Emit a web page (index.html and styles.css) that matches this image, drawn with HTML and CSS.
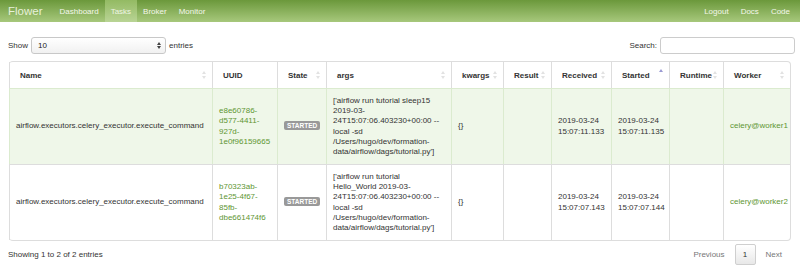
FILE: index.html
```html
<!DOCTYPE html>
<html lang="en">
<head>
    <meta charset="UTF-8">
    <title>Flower</title>
    <link rel="stylesheet" href="styles.css">
</head>
<body>
    <div class="navbar">
        <a class="brand" href="#">Flower</a>
        <a href="#">Dashboard</a>
        <a class="active" href="#">Tasks</a>
        <a href="#">Broker</a>
        <a href="#">Monitor</a>
        <div class="nav-right">
            <a href="#">Logout</a>
            <a href="#">Docs</a>
            <a href="#">Code</a>
        </div>
    </div>

    <div class="content">
        <div class="controls">
            <label class="length">Show
                <span class="select">10<span class="select-arrows"></span></span>
                entries</label>
            <label class="search">Search: <span class="search-input"></span></label>
        </div>

        <table class="tasks">
            <colgroup>
                <col style="width:203px">
                <col style="width:65px">
                <col style="width:49px">
                <col style="width:125px">
                <col style="width:52px">
                <col style="width:48px">
                <col style="width:60px">
                <col style="width:58px">
                <col style="width:54px">
                <col style="width:67px">
            </colgroup>
            <thead>
                <tr>
                    <th><div class="th-in">Name<span class="sort"></span></div></th>
                    <th><div class="th-in">UUID</div></th>
                    <th><div class="th-in">State<span class="sort"></span></div></th>
                    <th><div class="th-in">args<span class="sort"></span></div></th>
                    <th><div class="th-in">kwargs<span class="sort"></span></div></th>
                    <th><div class="th-in">Result<span class="sort"></span></div></th>
                    <th><div class="th-in">Received<span class="sort"></span></div></th>
                    <th><div class="th-in">Started<span class="sort asc"></span></div></th>
                    <th><div class="th-in">Runtime<span class="sort"></span></div></th>
                    <th><div class="th-in">Worker<span class="sort"></span></div></th>
                </tr>
            </thead>
            <tbody>
                <tr class="success">
                    <td>airflow.executors.celery_executor.execute_command</td>
                    <td><a href="#">e8e60786-<br>d577-4411-<br>927d-<br>1e0f96159665</a></td>
                    <td><span class="label">STARTED</span></td>
                    <td>['airflow run tutorial sleep15<br>2019-03-<br>24T15:07:06.403230+00:00 --<br>local -sd<br>/Users/hugo/dev/formation-<br>data/airflow/dags/tutorial.py']</td>
                    <td>{}</td>
                    <td></td>
                    <td class="nowrap">2019-03-24<br>15:07:11.133</td>
                    <td class="nowrap">2019-03-24<br>15:07:11.135</td>
                    <td></td>
                    <td class="nowrap"><a href="#">celery@worker1</a></td>
                </tr>
                <tr>
                    <td>airflow.executors.celery_executor.execute_command</td>
                    <td><a href="#">b70323ab-<br>1e25-4f67-<br>85fb-<br>dbe661474f6</a></td>
                    <td><span class="label">STARTED</span></td>
                    <td>['airflow run tutorial<br>Hello_World 2019-03-<br>24T15:07:06.403230+00:00 --<br>local -sd<br>/Users/hugo/dev/formation-<br>data/airflow/dags/tutorial.py']</td>
                    <td>{}</td>
                    <td></td>
                    <td class="nowrap">2019-03-24<br>15:07:07.143</td>
                    <td class="nowrap">2019-03-24<br>15:07:07.144</td>
                    <td></td>
                    <td class="nowrap"><a href="#">celery@worker2</a></td>
                </tr>
            </tbody>
        </table>

        <div class="footer">
            <div class="info">Showing 1 to 2 of 2 entries</div>
            <div class="pagination">
                <a href="#">Previous</a>
                <a class="current" href="#">1</a>
                <a href="#">Next</a>
            </div>
        </div>
    </div>
</body>
</html>
```

FILE: styles.css
```css
body {
    margin: 0;
    font-family: 'Liberation Sans', Arial, sans-serif;
    font-size: 8px;
    color: #333;
    background: #fff;
}
a {
    text-decoration: none;
}
.navbar {
    height: 22px;
    display: flex;
    align-items: stretch;
    padding-left: 8px;
    background: linear-gradient(#6b983b, #a7c87c);
}
.navbar a {
    display: flex;
    align-items: center;
    padding: 0 6px;
    color: #f4f7ec;
}
.navbar a.brand {
    font-size: 11.5px;
    color: #e7f0da;
    padding: 0 11px 0 0;
}
.navbar a.active {
    background: linear-gradient(#93ba63, #b9d495);
    color: #eef4e4;
}
.nav-right {
    margin-left: auto;
    display: flex;
    padding-right: 4px;
}
.navbar .nav-right a {
    padding: 0 6px;
}
.content {
    padding: 15px 5px 0 8px;
}
.controls {
    display: flex;
    justify-content: space-between;
    align-items: center;
    height: 17px;
    margin-bottom: 7px;
}
.controls label {
    display: flex;
    align-items: center;
}
.select {
    position: relative;
    display: inline-flex;
    align-items: center;
    box-sizing: border-box;
    width: 135px;
    height: 17px;
    margin: 0 3px 0 3px;
    padding-left: 6px;
    border: 1px solid #c8c8c8;
    border-radius: 3px;
    background: linear-gradient(#ffffff, #f1f1f1);
    color: #222;
}
.select-arrows {
    position: absolute;
    right: 4px;
    top: 4px;
    width: 0;
    height: 0;
    border-left: 2px solid transparent;
    border-right: 2px solid transparent;
    border-bottom: 3px solid #444;
}
.select-arrows::after {
    content: '';
    position: absolute;
    left: -2px;
    top: 4px;
    border-left: 2px solid transparent;
    border-right: 2px solid transparent;
    border-top: 3px solid #444;
}
.search-input {
    display: inline-block;
    box-sizing: border-box;
    width: 135px;
    height: 17px;
    margin-left: 3px;
    border: 1px solid #ccc;
    border-radius: 3px;
    background: #fff;
}
.tasks {
    width: 781px;
    margin-left: 1px;
    table-layout: fixed;
    border-collapse: separate;
    border-spacing: 0;
    border: 1px solid #dddddd;
    border-left: none;
    border-radius: 4px;
}
.tasks th,
.tasks td {
    border-left: 1px solid #dddddd;
    text-align: left;
}
.tasks th {
    height: 26px;
    padding: 0;
    font-weight: bold;
    color: #333;
}
.th-in {
    display: flex;
    align-items: center;
    justify-content: space-between;
    padding: 0 6px 0 10px;
}
.sort {
    position: relative;
    width: 4px;
    height: 8px;
}
.sort::before,
.sort::after {
    content: '';
    position: absolute;
    left: 0;
    border-left: 2px solid transparent;
    border-right: 2px solid transparent;
}
.sort::before {
    top: 0;
    border-bottom: 3px solid #e2e2e2;
}
.sort::after {
    bottom: 0;
    border-top: 3px solid #e2e2e2;
}
.sort.asc::before {
    top: -2px;
    border-bottom-color: #9a9ad2;
}
.sort.asc::after {
    display: none;
}
.tasks td {
    height: 65px;
    padding: 5px 6px;
    border-top: 1px solid #dddddd;
    line-height: 10.15px;
    vertical-align: middle;
    word-wrap: break-word;
}
.tasks td.nowrap {
    white-space: nowrap;
    padding-right: 2px;
}
.tasks tr.success td {
    background: #eff7e9;
    border-color: #dbebcf;
}
.tasks td a {
    color: #5e9633;
}
.label {
    display: inline-block;
    padding: 1px 3px;
    border-radius: 2px;
    background: #999999;
    color: #fff;
    font-size: 6.5px;
    font-weight: bold;
    line-height: 7px;
}
.footer {
    display: flex;
    justify-content: space-between;
    align-items: center;
    padding: 3px 0 0 0;
}
.pagination {
    display: flex;
    align-items: center;
    margin-right: 3px;
}
.pagination a {
    padding: 0 10px;
    color: #777;
}
.pagination a.current {
    box-sizing: border-box;
    width: 21px;
    height: 21px;
    padding: 0;
    display: flex;
    align-items: center;
    justify-content: center;
    border: 1px solid #cfcfcf;
    border-radius: 2px;
    background: linear-gradient(#ffffff, #e8e8e8);
    color: #333;
}
```
